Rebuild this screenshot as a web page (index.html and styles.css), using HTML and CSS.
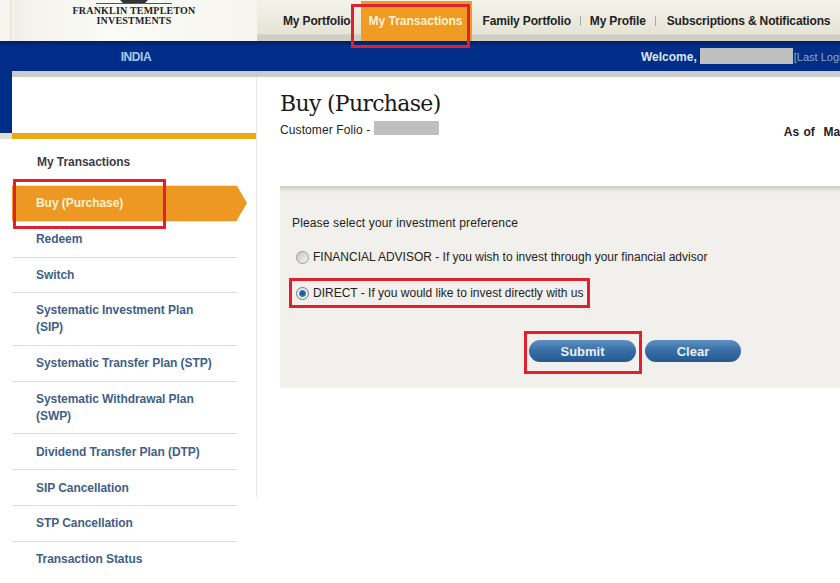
FILE: index.html
```html
<!DOCTYPE html>
<html lang="en">
<head>
    <meta charset="UTF-8">
    <title>Buy (Purchase)</title>
    <link rel="stylesheet" href="styles.css">
</head>
<body>
    <!-- Top bar -->
    <div class="topbar">
        <div class="logo">
            <svg class="logo-mark" width="76" height="4" viewBox="0 0 76 4">
                <path d="M0 3.5H76" stroke="#555" stroke-width="1"/>
                <path d="M24 0H52L49 3H27Z" fill="#333"/>
            </svg>
            <div class="logo-text">FRANKLIN TEMPLETON<br>INVESTMENTS</div>
        </div>
        <div class="topnav">
            <a class="topnav-item">My Portfolio</a>
            <a class="topnav-item active">My Transactions</a>
            <a class="topnav-item family">Family Portfolio</a>
            <span class="topnav-sep"></span>
            <a class="topnav-item">My Profile</a>
            <span class="topnav-sep"></span>
            <a class="topnav-item subs">Subscriptions &amp; Notifications</a>
        </div>
    </div>

    <div class="blueband">
        <div class="country">INDIA</div>
        <div class="welcome">Welcome,<span class="mask mask-name"></span><span class="lastlog">[Last Login</span></div>
    </div>

    <div class="main">
        <div class="edge"></div>
        <div class="main-inner">
            <!-- Left menu -->
            <div class="sidebar">
                <div class="sidebar-top"></div>
                <div class="sidebar-body">
                    <div class="menu-title">My Transactions</div>
                    <div class="menu-active">Buy (Purchase)</div>
                    <ul class="menu">
                        <li class="first">Redeem</li>
                        <li>Switch</li>
                        <li class="two-line">Systematic Investment Plan<br>(SIP)</li>
                        <li>Systematic Transfer Plan (STP)</li>
                        <li class="two-line">Systematic Withdrawal Plan<br>(SWP)</li>
                        <li class="low">Dividend Transfer Plan (DTP)</li>
                        <li class="low">SIP Cancellation</li>
                        <li>STP Cancellation</li>
                        <li>Transaction Status</li>
                    </ul>
                </div>
            </div>

            <!-- Content -->
            <div class="content">
                <h1 class="title">Buy (Purchase)</h1>
                <div class="folio-row">
                    <div class="folio">Customer Folio - <span class="mask mask-folio"></span></div>
                    <div class="asof">As of&nbsp; March</div>
                </div>
                <div class="panel">
                    <p class="prompt">Please select your investment preference</p>
                    <label class="option"><span class="radio"></span>FINANCIAL ADVISOR - If you wish to invest through your financial advisor</label>
                    <label class="option"><span class="radio checked"></span>DIRECT - If you would like to invest directly with us</label>
                    <div class="buttons">
                        <button class="btn btn-submit">Submit</button>
                        <button class="btn btn-clear">Clear</button>
                    </div>
                </div>
            </div>
        </div>
    </div>

    <!-- Red callouts drawn over the screenshot -->
    <div class="callout callout-nav"></div>
    <div class="callout callout-menu"></div>
    <div class="callout callout-direct"></div>
    <div class="callout callout-submit"></div>
</body>
</html>
```

FILE: styles.css
```css
html, body {
    margin: 0;
    padding: 0;
    width: 840px;
    height: 583px;
    overflow: hidden;
    background-color: #ffffff;
    font-family: "Liberation Sans", Arial, sans-serif;
}

body {
    position: relative;
}

/* Top bar */
.topbar {
    display: flex;
    height: 41px;
    background: linear-gradient(to right, #f6f5ef, #e9e8de);
}

.logo {
    width: 247px;
    flex-shrink: 0;
    margin-left: 10px;
    background: linear-gradient(to right, #f1f0e8, #fbfbf7 40%, #f6f5ee);
    border-left: 1px solid #e2e1d6;
    box-sizing: border-box;
    text-align: center;
}

.logo-mark {
    display: block;
    margin: 0 auto 2px;
}

.logo-text {
    font-family: "Liberation Serif", serif;
    font-size: 10px;
    font-weight: bold;
    line-height: 10px;
    color: #222222;
    letter-spacing: 0.2px;
}

.topnav {
    flex: 1;
    display: flex;
    align-items: flex-start;
    height: 41px;
    padding-left: 26px;
    box-sizing: border-box;
    background: linear-gradient(to bottom, #f4f3ec 0, #e6e4d5 34px, #cdccc1 35px, #d2d1c8 41px);
    font-size: 12px;
    font-weight: bold;
    letter-spacing: -0.15px;
    color: #222222;
}

.topnav-item {
    line-height: 42px;
    white-space: nowrap;
}

.topnav-item.active {
    width: 111px;
    height: 40px;
    margin-top: 1px;
    margin-left: 10px;
    padding-right: 1px;
    box-sizing: border-box;
    line-height: 40px;
    letter-spacing: 0;
    text-align: center;
    background-color: #f09b22;
    color: #fff3d6;
}

.topnav-item.family {
    margin-left: 11px;
}

.topnav-item.subs {
    margin-left: 2px;
}

.topnav-sep {
    width: 1px;
    height: 10px;
    margin: 16px 9px 0;
    background-color: #aaaaa0;
}

/* Blue band */
.blueband {
    height: 30px;
    padding-top: 1px;
    box-sizing: border-box;
    display: flex;
    align-items: center;
    background: linear-gradient(to bottom, #001f5e 0, #002d87 5px, #002d87 100%);
    font-size: 12px;
    font-weight: bold;
}

.country {
    width: 272px;
    flex-shrink: 0;
    text-align: center;
    letter-spacing: -0.4px;
    color: #a9c8ee;
}

.welcome {
    margin-left: 369px;
    flex-shrink: 0;
    display: flex;
    align-items: center;
    white-space: nowrap;
    color: #dbe6f5;
}

.mask {
    display: inline-block;
    background-color: #bfbfbf;
}

.mask-name {
    width: 93px;
    height: 16px;
    margin-left: 3px;
    margin-top: -2px;
}

.lastlog {
    margin-left: 1px;
    font-size: 11px;
    font-weight: normal;
    color: #8ea6cf;
}

/* Main area */
.main {
    display: flex;
}

.edge {
    width: 12px;
    height: 62px;
    flex-shrink: 0;
    background-color: #002d87;
    border-bottom: 6px solid #e0dfd4;
}

.main-inner {
    flex: 1;
    min-width: 0;
    display: flex;
    border-top: 6px solid #cccccc;
}

.sidebar {
    width: 245px;
    height: 420px;
    flex-shrink: 0;
    border-right: 1px solid #e6e6e6;
    box-sizing: border-box;
}

.sidebar-top {
    height: 56px;
    border-bottom: 6px solid #e9ac10;
}

.sidebar-body {
    width: 225px;
    font-size: 12px;
    font-weight: bold;
    letter-spacing: -0.06px;
}

.menu-title {
    padding: 16px 0 0 25px;
    line-height: 14px;
    height: 30px;
    color: #3c3c46;
}

.menu-active {
    position: relative;
    height: 36px;
    line-height: 35px;
    padding-left: 24px;
    box-sizing: border-box;
    background-color: #ec9822;
    color: #fff0d0;
    border-top: 1px solid #fbe3b8;
    background-clip: padding-box;
}

.menu-active::after {
    content: "";
    position: absolute;
    top: 0;
    left: 225px;
    border-left: 10px solid #ec9822;
    border-top: 17.5px solid transparent;
    border-bottom: 17.5px solid transparent;
}

.menu {
    list-style: none;
    margin: 0;
    padding: 0;
    color: #3f5f88;
    border-top: 1px solid #fbe3b8;
}

.menu li {
    padding: 10px 0 11px 24px;
    line-height: 14px;
    border-bottom: 1px solid #dddddd;
}

.menu li:nth-child(2) {
    padding-bottom: 10px;
}

.menu li.low {
    padding: 11px 0 10px 24px;
}

.menu li.two-line {
    line-height: 17px;
    padding: 9px 0 9px 24px;
}

.menu li:nth-child(5) {
    padding-bottom: 8px;
}

.menu li:last-child {
    border-bottom: none;
}

/* Content */
.content {
    flex: 1;
    min-width: 0;
    padding: 13px 0 0 23px;
}

.title {
    margin: 0;
    font-family: "DejaVu Serif", serif;
    font-size: 22px;
    font-weight: normal;
    letter-spacing: -0.7px;
    line-height: 28px;
    color: #1a1a1a;
}

.folio-row {
    display: flex;
    height: 29px;
    margin-top: 3px;
    font-size: 12px;
    color: #222222;
    white-space: nowrap;
}

.folio {
    display: flex;
    align-items: flex-start;
    line-height: 19px;
    letter-spacing: 0.1px;
    white-space: pre;
}

.mask-folio {
    width: 65px;
    height: 14px;
}

.asof {
    margin-left: 345px;
    margin-top: 4px;
    line-height: 14px;
    font-weight: bold;
    word-spacing: 1px;
}

.panel {
    margin-top: 36px;
    height: 202px;
    padding: 30px 0 0 12px;
    box-sizing: border-box;
    background: linear-gradient(to bottom, #c9c8c2 0, #efeeea 6px, #f2f0ec 12px);
    font-size: 12px;
    color: #222222;
}

.prompt {
    margin: 0 0 20px;
    line-height: 14px;
    letter-spacing: 0.15px;
}

.option {
    display: flex;
    align-items: center;
    height: 14px;
    margin: 0 0 22px 4px;
    white-space: nowrap;
}

.radio {
    width: 11px;
    height: 11px;
    margin-right: 4px;
    border: 1px solid #999999;
    border-radius: 50%;
    background: linear-gradient(135deg, #c4c4c4, #f6f6f6);
}

.radio.checked {
    background: radial-gradient(circle, #0f4a80 0, #2f7cb4 3px, #f4f4f4 4px, #dcdcdc 100%);
    border-color: #66788a;
}

.buttons {
    display: flex;
    gap: 9px;
    margin: 40px 0 0 237px;
}

.btn {
    height: 22px;
    padding: 1px 0 0;
    border: none;
    border-radius: 11px;
    background: linear-gradient(to bottom, #5f90c0 0, #3a70a8 45%, #25598f 100%);
    color: #e8eff7;
    font-family: "Liberation Sans", Arial, sans-serif;
    font-size: 13px;
    font-weight: bold;
}

.btn-submit {
    width: 107px;
}

.btn-clear {
    width: 96px;
}

/* Red callouts */
.callout {
    position: absolute;
    box-sizing: border-box;
    border: 3px solid #e0202c;
}

.callout-nav {
    left: 351px;
    top: 4px;
    width: 119px;
    height: 44px;
}

.callout-menu {
    left: 13px;
    top: 179px;
    width: 153px;
    height: 50px;
}

.callout-direct {
    left: 289px;
    top: 278px;
    width: 301px;
    height: 30px;
}

.callout-submit {
    left: 524px;
    top: 331px;
    width: 118px;
    height: 43px;
}
```
